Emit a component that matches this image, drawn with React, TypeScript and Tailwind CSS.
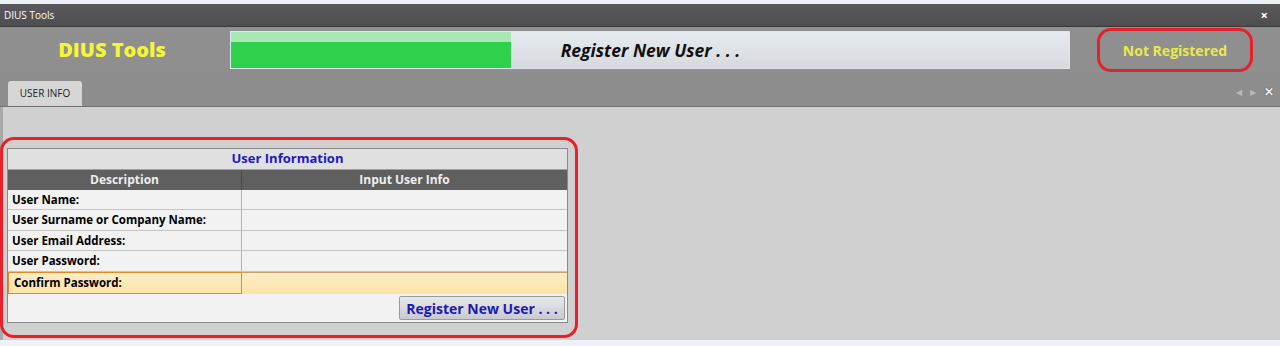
import React from "react";

const font = { fontFamily: '"Open Sans", "Noto Sans", "Liberation Sans", sans-serif' };

const rows = [
  { label: "User Name:", h: "h-[20px]" },
  { label: "User Surname or Company Name:", h: "h-[21px]" },
  { label: "User Email Address:", h: "h-[20px]" },
  { label: "User Password:", h: "h-[21px]" },
];

function FormRow({ label, h, active }: { label: string; h?: string; active?: boolean }) {
  if (active) {
    return (
      <div className="flex h-[22px] bg-gradient-to-b from-[#fdeec8] to-[#fde3a6]">
        <div className="flex w-[234px] items-center border border-[#e08a2a] pl-[5px] text-[11.5px] font-bold text-black">
          {label}
        </div>
        <div className="flex-1 border-t border-[#c9a070]" />
      </div>
    );
  }
  return (
    <div className={`flex ${h} border-b border-[#c4c4c4] bg-[#f2f2f2]`}>
      <div className="flex w-[234px] items-center border-r border-[#b4b4b4] pl-[4px] text-[11.5px] font-bold text-black">
        {label}
      </div>
      <div className="flex-1" />
    </div>
  );
}

export default function App() {
  return (
    <div className="flex h-[346px] w-[1280px] flex-col bg-[#eef2f8]" style={font}>
      <div className="h-[4px]" />
      {/* title bar */}
      <div className="flex h-[23px] items-center justify-between border-b border-[#3a3a3a] bg-gradient-to-b from-[#5a5a5c] to-[#4e4e50] px-[4px]">
        <span className="text-[10px] text-white">DIUS Tools</span>
        <span className="mr-[8px] text-[13px] font-bold leading-none text-white">×</span>
      </div>
      {/* header */}
      <div className="flex h-[46px] items-center bg-[#8f8f8f]">
        <div className="flex w-[230px] justify-center">
          <span className="ml-[-6px] text-[20px] font-extrabold text-[#f5f53a]">DIUS Tools</span>
        </div>
        <div className="relative flex h-[38px] w-[840px] items-center justify-center border border-[#dde6f0] bg-gradient-to-b from-[#e6ebf0] to-[#d6dade]">
          <div className="absolute left-0 top-0 flex h-full w-[280px] flex-col">
            <div className="h-[10px] bg-[#a8e8b4]" />
            <div className="flex-1 bg-[#2fd14b]" />
          </div>
          <span className="relative ml-[1px] text-[17.5px] font-bold italic text-[#111]">Register New User . . .</span>
        </div>
        <div className="ml-[27px] flex h-[44px] w-[156px] items-center justify-center rounded-[14px] border-[3px] border-[#e8202a]">
          <span className="text-[14px] font-bold text-[#eaea46]">Not Registered</span>
        </div>
      </div>
      {/* tab strip */}
      <div className="flex h-[34px] items-end justify-between border-b border-[#707070] bg-[#8d8d8d]">
        <div className="ml-[8px] flex h-[25px] w-[74px] items-center justify-center rounded-t-[3px] bg-[#d6d6d6] text-[10px] text-[#222]">
          USER INFO
        </div>
        <div className="mb-[8px] mr-[6px] flex items-center gap-[8px] text-[#b8b8b8]">
          <span className="text-[8px] leading-none">◀</span>
          <span className="text-[8px] leading-none">▶</span>
          <span className="text-[12px] font-black leading-none text-[#f0f0f0] [text-shadow:0_0_1px_#222]">✕</span>
        </div>
      </div>
      {/* content */}
      <div className="flex h-[233px] border-l-[3px] border-[#a8a8a8] bg-[#d0d0d0]">
        <div className="ml-[-3px] mt-[30px] flex h-[201px] w-[578px] flex-col rounded-[14px] border-[3px] border-[#e8202a] pb-[12px] pl-[4px] pr-[7px] pt-[8px]">
          <div className="flex flex-1 flex-col border border-[#8a8a8a] bg-[#f2f2f2]">
            <div className="flex h-[21px] items-center justify-center border-b border-[#a0a0a0] bg-[#e0e0e0] text-[13px] font-bold text-[#1a1ac8]">
              User Information
            </div>
            <div className="flex h-[20px] bg-[#5f5f5f] text-[12px] font-bold text-[#eeeeee]">
              <div className="flex w-[234px] items-center justify-center border-r border-[#4a4a4a]">Description</div>
              <div className="flex flex-1 items-center justify-center">Input User Info</div>
            </div>
            {rows.map((r) => (
              <FormRow key={r.label} label={r.label} h={r.h} />
            ))}
            <FormRow label="Confirm Password:" active />
            <div className="flex flex-1 items-center justify-end pr-[2px]">
              <button className="h-[24px] w-[166px] rounded-[2px] border border-[#9a9a9a] bg-gradient-to-b from-[#e8e8ec] to-[#c8cad0] text-[14px] font-bold text-[#1a1ab0]">
                Register New User . . .
              </button>
            </div>
          </div>
        </div>
      </div>
    </div>
  );
}
